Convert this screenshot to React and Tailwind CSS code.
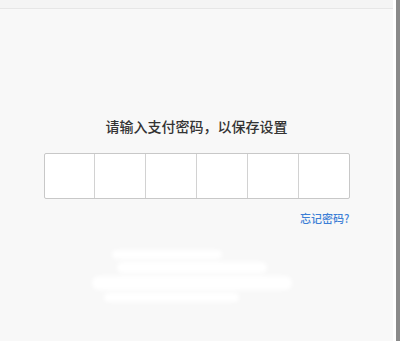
import React from "react";

const cells = [0, 1, 2, 3, 4, 5];

const App = () => {
  return (
    <div
      className="flex h-[341px] w-[400px] overflow-hidden bg-[#f8f8f8]"
      style={{ fontFamily: '"Noto Sans CJK SC", "Noto Sans", sans-serif' }}
    >
      {/* main panel */}
      <div className="flex w-[393px] flex-col">
        <div className="h-[9px] border-b border-[#e6e6e6] bg-[#f4f4f4]"></div>

        <div className="flex flex-col items-center pt-[107px]">
          <p className="text-[14px] font-medium leading-[20px] text-[#333]">
            请输入支付密码，以保存设置
          </p>

          {/* password boxes */}
          <div className="mt-[17px] flex h-[46px] w-[306px] rounded-[2px] border border-[#c8c8c8] bg-white">
            {cells.map((i) => (
              <div
                key={i}
                className={`flex-1 ${i < 5 ? "border-r border-[#d2d2d2]" : ""}`}
              ></div>
            ))}
          </div>

          <div className="mt-[11px] flex w-[306px] justify-end">
            <span className="text-[11px] font-medium leading-[16px] text-[#3d7fd6]">
              忘记密码?
            </span>
          </div>

          {/* smudged area */}
          <div className="mt-[24px] ml-[-10px] flex w-[210px] flex-col items-center gap-[3px] blur-[2px]">
            <div className="mr-[50px] h-[9px] w-[110px] rounded-full bg-white"></div>
            <div className="h-[11px] w-[150px] rounded-full bg-white"></div>
            <div className="h-[14px] w-[200px] rounded-full bg-white"></div>
            <div className="mr-[40px] h-[9px] w-[135px] rounded-full bg-white"></div>
          </div>
        </div>
      </div>

      {/* right edge */}
      <div className="w-[3px] bg-white"></div>
      <div className="w-[4px] bg-[#8a8a8a]"></div>
    </div>
  );
};

export default App;
